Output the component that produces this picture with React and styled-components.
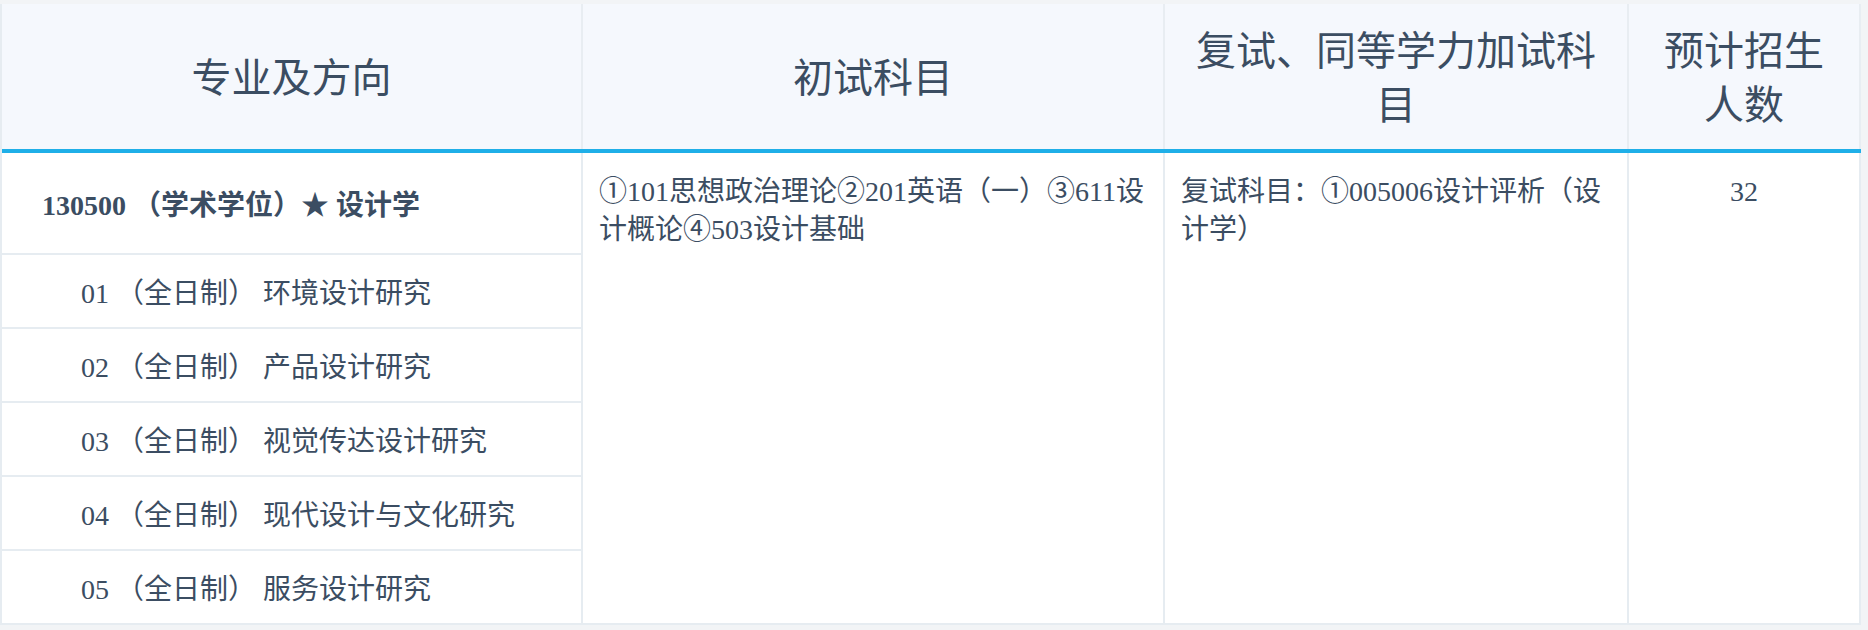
import styled, { createGlobalStyle } from 'styled-components';

const GlobalStyle = createGlobalStyle`
  body {
    margin: 0;
    padding-top: 4px;
    background: #f2f4f6;
    font-family: "Liberation Serif", "Noto Sans CJK SC", serif;
    color: #3b4d62;
  }
`;

const majors = [
  '01 （全日制） 环境设计研究',
  '02 （全日制） 产品设计研究',
  '03 （全日制） 视觉传达设计研究',
  '04 （全日制） 现代设计与文化研究',
  '05 （全日制） 服务设计研究',
];

const App = () => {
  return (
    <>
      <GlobalStyle />
      <Table>
        <HeadRow>
          <HeadCell>专业及方向</HeadCell>
          <HeadCell>初试科目</HeadCell>
          <HeadCell>复试、同等学力加试科目</HeadCell>
          <HeadCell>预计招生人数</HeadCell>
        </HeadRow>
        <Body>
          <MajorCell main>130500 （学术学位）★ 设计学</MajorCell>
          {majors.map((m) => (
            <MajorCell key={m}>{m}</MajorCell>
          ))}
          <TextCell col={2}>①101思想政治理论②201英语（一）③611设计概论④503设计基础</TextCell>
          <TextCell col={3}>复试科目：①005006设计评析（设计学）</TextCell>
          <TextCell col={4} center>32</TextCell>
        </Body>
      </Table>
    </>
  );
};

const Table = styled.div`
  width: 1861px;
  background: #fff;
  border-left: 2px solid #e6ecf1;
  box-sizing: border-box;
`;

const columns = '581px 582px 464px 232px';

const HeadRow = styled.div`
  display: grid;
  grid-template-columns: ${columns};
  height: 145px;
  background: #f5f8fd;
  border-bottom: 4px solid #1fafe8;
`;

const HeadCell = styled.div`
  display: flex;
  align-items: center;
  justify-content: center;
  text-align: center;
  padding: 4px 20px 0;
  font-size: 40px;
  line-height: 54px;
  border-right: 2px solid #e8edf2;
`;

const Body = styled.div`
  display: grid;
  grid-template-columns: ${columns};
  grid-template-rows: 102px repeat(5, 74px);
`;

const MajorCell = styled.div`
  grid-column: 1;
  display: flex;
  align-items: center;
  padding-left: ${(p) => (p.main ? '40px' : '79px')};
  font-size: 28px;
  font-weight: ${(p) => (p.main ? 'bold' : 'normal')};
  border-right: 2px solid #e6ecf1;
  border-bottom: 2px solid #e6ecf1;
`;

const TextCell = styled.div`
  grid-column: ${(p) => p.col};
  grid-row: 1 / span 6;
  padding: 20px 16px;
  font-size: 28px;
  line-height: 38px;
  text-align: ${(p) => (p.center ? 'center' : 'left')};
  border-right: 2px solid #e6ecf1;
  border-bottom: 2px solid #e6ecf1;
`;

export default App;
